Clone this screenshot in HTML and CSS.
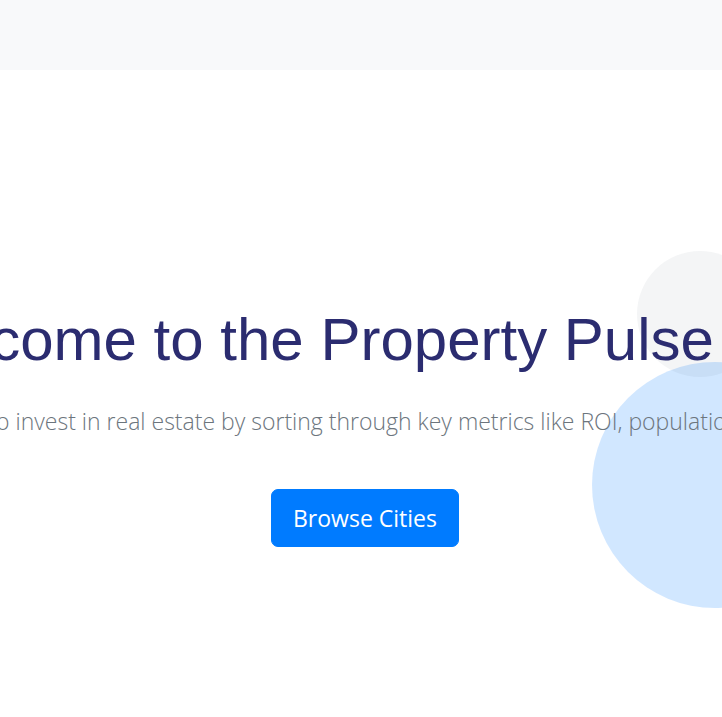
FILE: index.html
```html
<!DOCTYPE html>
<html lang="en">
<head>
<meta charset="utf-8">
<title>Property Pulse</title>
<link rel="stylesheet" href="styles.css">
</head>
<body>
<header class="topbar"></header>
<main class="hero">
  <div class="blob blob-gray"></div>
  <div class="blob blob-blue"></div>
  <div class="hero-content">
    <h1 class="hero-title">Welcome to the Property Pulse App</h1>
    <p class="hero-lead">Find the best cities to invest in real estate by sorting through key metrics like ROI, population growth, and more.</p>
    <button class="btn-browse" type="button">Browse Cities</button>
  </div>
</main>
</body>
</html>
```
FILE: styles.css
```css
html, body {
  margin: 0;
  padding: 0;
  overflow-x: hidden;
  background: #ffffff;
}

.topbar {
  height: 70px;
  background: #f8f9fa;
}

.hero {
  position: relative;
  height: 647px;
}

.blob {
  position: absolute;
  border-radius: 50%;
}

.blob-blue {
  left: 592px;
  top: 292px;
  width: 246px;
  height: 246px;
  background: rgba(0, 123, 255, 0.18);
}

.blob-gray {
  left: 637px;
  top: 181px;
  width: 126px;
  height: 126px;
  background: rgba(30, 50, 80, 0.05);
  z-index: 1;
}

.hero-content {
  position: relative;
  z-index: 2;
  display: flex;
  flex-direction: column;
  align-items: center;
  padding-top: 234px;
}

.hero-title {
  margin: 0;
  font-family: "Liberation Sans", Arial, sans-serif;
  font-weight: 400;
  font-size: 60px;
  line-height: 72px;
  color: #2b2c70;
  white-space: nowrap;
}

.hero-lead {
  margin: 27px 0 0 3px;
  font-family: "Open Sans", sans-serif;
  font-weight: 300;
  font-size: 23px;
  line-height: 36px;
  color: #6c757d;
  white-space: nowrap;
}

.btn-browse {
  margin: 50px 0 0 8px;
  font-family: "Open Sans", sans-serif;
  font-size: 23px;
  line-height: 36px;
  color: #ffffff;
  background: #007bff;
  border: 1px solid #007bff;
  border-radius: 7px;
  padding: 10px 21px;
  cursor: pointer;
}
```
